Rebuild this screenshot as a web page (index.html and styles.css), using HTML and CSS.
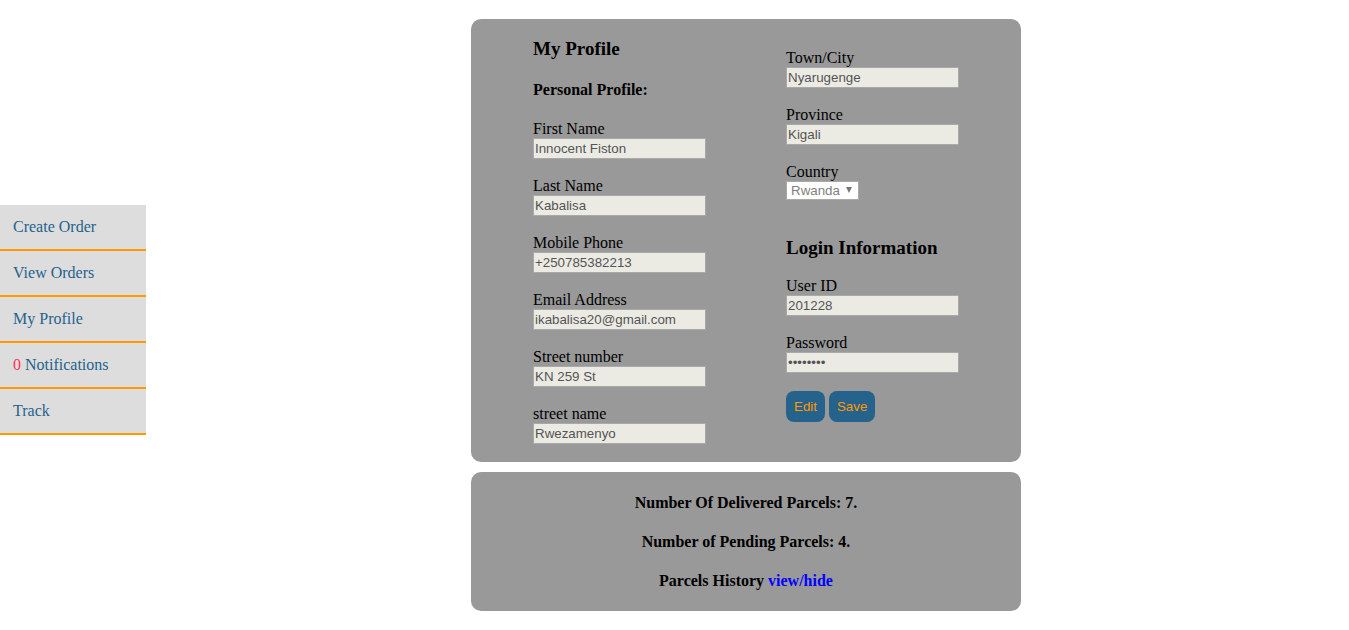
FILE: index.html
```html
<!DOCTYPE html>
<html lang="en">
<head>
<meta charset="utf-8">
<title>My Profile</title>
<link rel="stylesheet" href="styles.css">
</head>
<body>
<div class="page">
  <nav class="sidebar">
    <a href="#create">Create Order</a>
    <a href="#orders">View Orders</a>
    <a href="#profile">My Profile</a>
    <a href="#notifications"><span class="count">0</span> Notifications</a>
    <a href="#track">Track</a>
  </nav>
  <main class="content">
    <form class="panel profile">
      <div class="column">
        <h3>My Profile</h3>
        <h4>Personal Profile:</h4>
        <div class="fields">
          <div class="field"><label for="first">First Name</label><input id="first" type="text" value="Innocent Fiston" disabled></div>
          <div class="field"><label for="last">Last Name</label><input id="last" type="text" value="Kabalisa" disabled></div>
          <div class="field"><label for="phone">Mobile Phone</label><input id="phone" type="text" value="+250785382213" disabled></div>
          <div class="field"><label for="email">Email Address</label><input id="email" type="email" value="ikabalisa20@gmail.com" disabled></div>
          <div class="field"><label for="number">Street number</label><input id="number" type="text" value="KN 259 St" disabled></div>
          <div class="field"><label for="street">street name</label><input id="street" type="text" value="Rwezamenyo" disabled></div>
        </div>
      </div>
      <div class="column second">
        <div class="fields">
          <div class="field"><label for="town">Town/City</label><input id="town" type="text" value="Nyarugenge" disabled></div>
          <div class="field"><label for="province">Province</label><input id="province" type="text" value="Kigali" disabled></div>
          <div class="field">
            <label for="country">Country</label>
            <div class="select">
              <select id="country" disabled><option>Rwanda</option></select>
              <svg class="arrow" viewBox="0 0 6 6" aria-hidden="true"><path d="M0 0h6L3 6z"/></svg>
            </div>
          </div>
        </div>
        <h3 class="login">Login Information</h3>
        <div class="fields">
          <div class="field"><label for="user">User ID</label><input id="user" type="text" value="201228" disabled></div>
          <div class="field"><label for="password">Password</label><input id="password" type="password" value="password" disabled></div>
          <div class="actions"><button type="button">Edit</button><button type="button">Save</button></div>
        </div>
      </div>
    </form>
    <section class="panel summary">
      <h4>Number Of Delivered Parcels: 7.</h4>
      <h4>Number of Pending Parcels: 4.</h4>
      <h4>Parcels History <a href="#history">view/hide</a></h4>
    </section>
  </main>
</div>
</body>
</html>
```
FILE: styles.css
```css
* {
  box-sizing: border-box;
}

body {
  margin: 0;
  background: #fff;
  color: #000;
  font-family: "Liberation Serif", "Times New Roman", serif;
  font-size: 16px;
  line-height: 18px;
}

h3,
h4 {
  margin: 0;
}

h3 {
  font-size: 19px;
  line-height: 20px;
}

h4 {
  font-size: 16px;
}

.page {
  display: flex;
  align-items: flex-start;
}

.sidebar {
  flex: 0 0 146px;
  margin-top: 205px;
}

.sidebar a {
  display: block;
  padding: 13px;
  border-bottom: 2px solid #ff9900;
  background: #ddd;
  color: #25628c;
  text-decoration: none;
}

.sidebar .count {
  color: #ff3355;
}

.content {
  display: flex;
  flex: 1;
  flex-direction: column;
  align-items: center;
  gap: 10px;
  padding: 19px 3px 19px 0;
}

.panel {
  width: 100%;
  max-width: 550px;
  border-radius: 10px;
  background: #999;
}

.profile {
  display: flex;
  justify-content: center;
  gap: 80px;
  padding: 20px 18px 18px;
}

.column {
  flex: 0 0 173px;
}

.column h4 {
  margin: 22px 0 21px;
}

.second {
  padding-top: 10px;
}

.login {
  margin: 38px 0 19px;
}

.fields {
  display: grid;
  gap: 18px;
}

.field label {
  display: block;
}

input,
select,
button {
  margin: 0;
  font-family: "Liberation Sans", Arial, sans-serif;
}

input {
  display: block;
  width: 100%;
  height: 21px;
  padding: 1px;
  border: 1px solid #a9a9a9;
  border-radius: 0;
  background: #ebebe4;
  color: #545454;
}

.select {
  position: relative;
  width: 73px;
}

select {
  display: block;
  width: 100%;
  height: 19px;
  padding: 0 4px;
  border: 1px solid #a9a9a9;
  border-radius: 0;
  background: #fff;
  color: #808080;
  opacity: 1;
  appearance: none;
}

.arrow {
  position: absolute;
  top: 6px;
  right: 7px;
  width: 6px;
  height: 6px;
  fill: #777;
}

.actions {
  display: flex;
  gap: 4px;
}

button {
  padding: 8px;
  border: 0;
  border-radius: 8px;
  background: #25628c;
  color: #ff9900;
}

.summary {
  display: grid;
  gap: 21px;
  padding: 22px 20px 21px;
  text-align: center;
}

.summary a {
  color: #00f;
  text-decoration: none;
}
```
